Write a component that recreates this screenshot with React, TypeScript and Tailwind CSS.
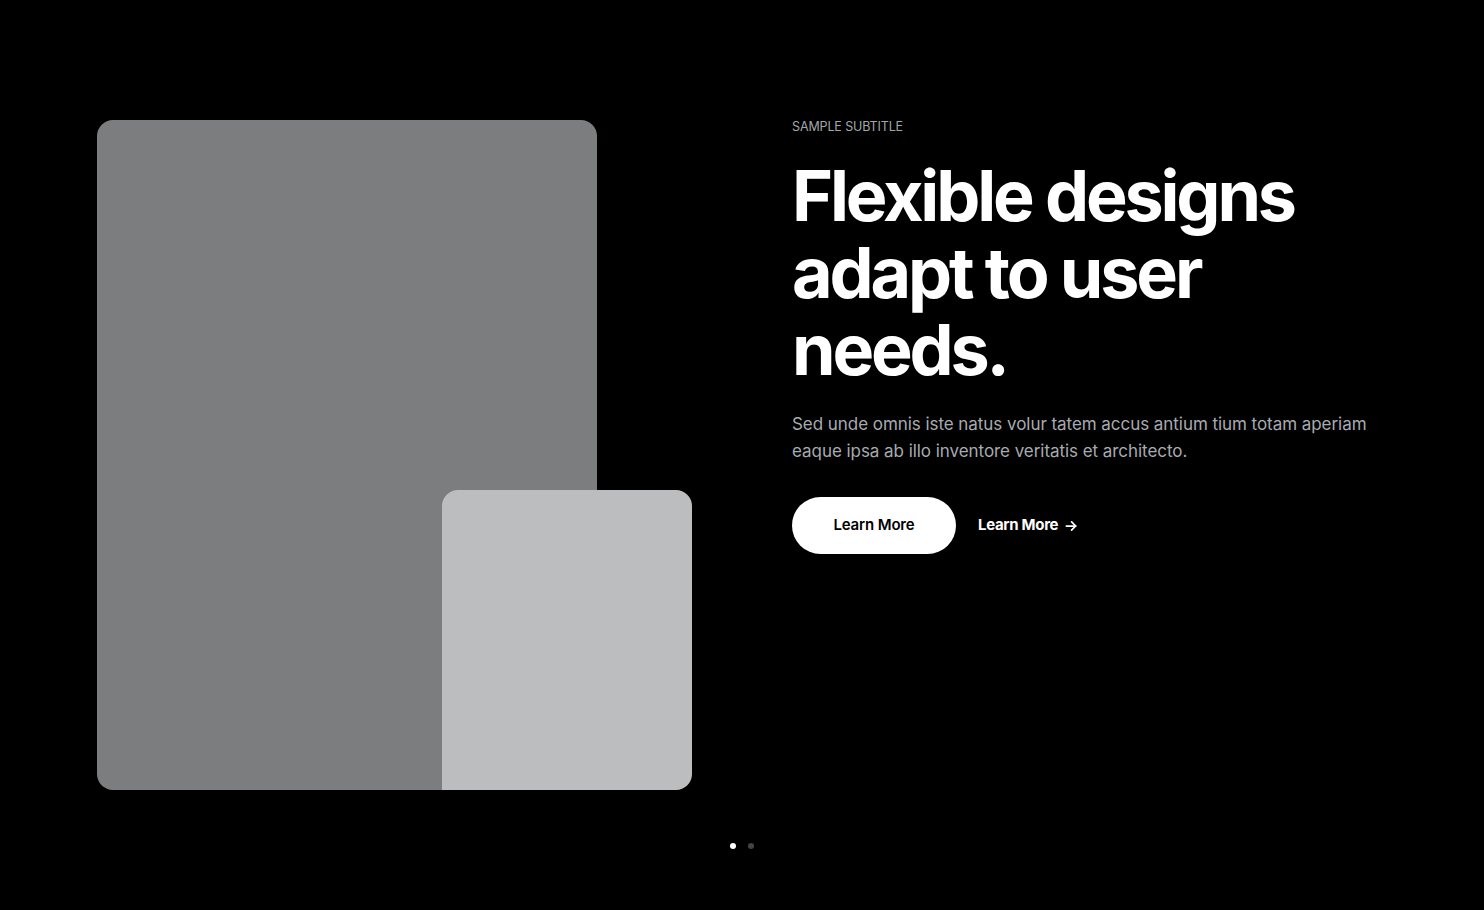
import React from "react";

export default function App() {
  return (
    <div
      className="w-[1484px] h-[910px] bg-black overflow-hidden"
      style={{ fontFamily: "Inter, 'Noto Sans', sans-serif" }}
    >
      <div className="pl-[97px] pt-[120px] flex">
        <div className="relative w-[595px] h-[670px] shrink-0">
          <div className="w-[500px] h-[670px] rounded-[16px] bg-[#7c7d7f]" />
          <div className="absolute left-[345px] top-[370px] w-[250px] h-[300px] rounded-[16px] rounded-bl-none bg-[#bcbdbf]" />
        </div>
        <div className="ml-[100px] w-[600px] flex flex-col">
          <div className="text-[12.5px] leading-[14px] text-[#a3a6aa] uppercase tracking-[-0.01em]">
            Sample subtitle
          </div>
          <h1 className="mt-[23px] text-[70px] leading-[77px] font-bold text-white tracking-[-0.045em]">
            Flexible designs
            <br />
            adapt to user
            <br />
            needs.
          </h1>
          <p className="mt-[23px] text-[17px] leading-[27px] text-[#a7abb0] tracking-[-0.003em]">
            Sed unde omnis iste natus volur tatem accus antium tium totam aperiam
            <br />
            eaque ipsa ab illo inventore veritatis et architecto.
          </p>
          <div className="mt-[32px] flex items-center gap-[22px]">
            <button className="w-[164px] h-[57px] rounded-full bg-white text-black text-[15px] font-semibold tracking-[-0.01em]">
              Learn More
            </button>
            <button className="flex items-center gap-[6px] text-white text-[15px] font-bold tracking-[-0.02em]">
              Learn More
              <svg width="14" height="14" viewBox="0 0 24 24" fill="none" stroke="currentColor" strokeWidth="3" strokeLinecap="round" strokeLinejoin="round">
                <path d="M4 12h16" />
                <path d="M13 5l7 7-7 7" />
              </svg>
            </button>
          </div>
        </div>
      </div>
      <div className="mt-[53px] flex justify-center gap-[12px]">
        <span className="w-[6px] h-[6px] rounded-full bg-white" />
        <span className="w-[6px] h-[6px] rounded-full bg-[#444444]" />
      </div>
    </div>
  );
}
